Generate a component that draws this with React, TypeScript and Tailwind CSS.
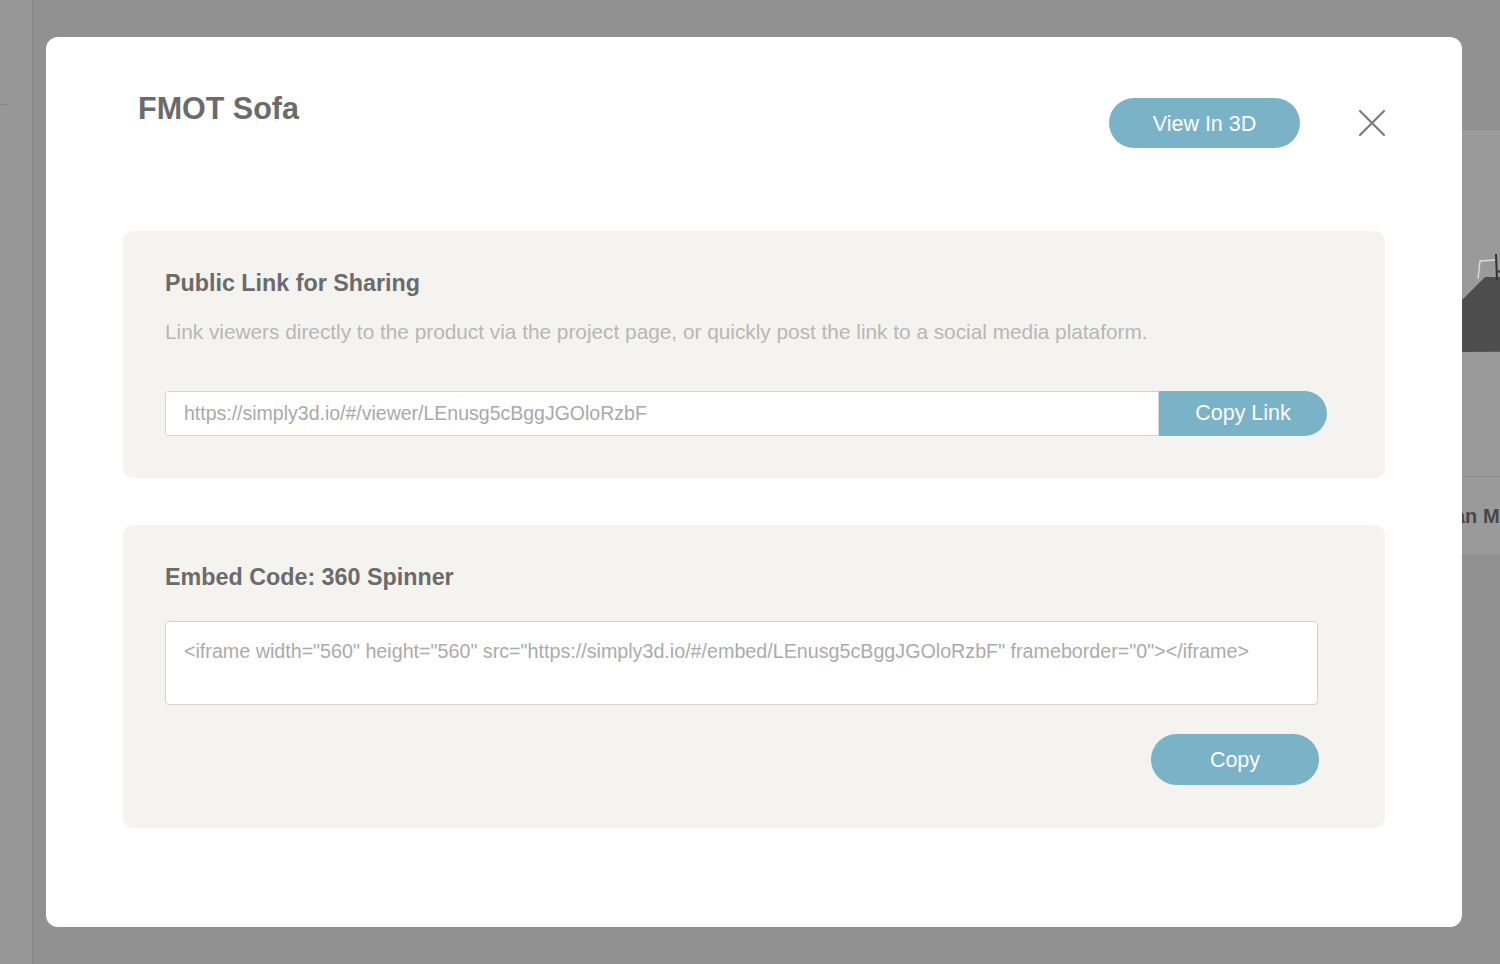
import React from "react"

const shareUrl = "https://simply3d.io/#/viewer/LEnusg5cBggJGOloRzbF"
const embedCode =
  '<iframe width="560" height="560" src="https://simply3d.io/#/embed/LEnusg5cBggJGOloRzbF" frameborder="0"></iframe>'

const CloseIcon = () => (
  <svg width="26" height="26" viewBox="0 0 26 26" fill="none">
    <path d="M1 1L25 25M25 1L1 25" stroke="#7d7d7d" strokeWidth="2.2" strokeLinecap="square" />
  </svg>
)

// page that sits behind the dimmed overlay
const BackgroundPage = () => {
  return (
    <div className="flex h-full w-full">
      <div className="h-full w-[33px] shrink-0 border-r border-[#858585] bg-[#979797] pt-[104px]">
        <div className="h-px w-[9px] bg-[#858585]" />
      </div>
      <div className="flex flex-1 justify-end pt-[130px]">
        <div className="-mr-[240px] h-[424px] w-[300px] shrink-0 bg-[#9a9a9a]">
          <div className="h-[347px] border-b border-[#8a8a8a]">
            <svg width="300" height="346" viewBox="0 0 300 346">
              <path d="M22 170 L45 147 L300 147 L300 220 L22 222 Z" fill="#4d4d4d" />
              <path d="M38 149 L40 131 L55 130" stroke="#d8d8d8" strokeWidth="1.5" fill="none" />
              <path d="M56 124 L57 150 M58 141 L62 143" stroke="#333" strokeWidth="2" fill="none" />
            </svg>
          </div>
          <div className="flex h-[77px] items-center pl-[14px]">
            <span className="text-[20px] font-bold text-[#474747]">an Model</span>
          </div>
        </div>
      </div>
    </div>
  )
}

const ShareModal = () => {
  return (
    <div className="h-[890px] w-[1416px] rounded-[12px] bg-white px-[77px] pt-[56px]">
      {/* Header */}
      <div className="flex items-start justify-between">
        <h2 className="pl-[15px] text-[30.5px] font-bold leading-[30px] text-[#6b6b6b]">FMOT Sofa</h2>
        <div className="mt-[5px] flex items-center gap-[59px]">
          <button className="h-[50px] w-[191px] rounded-full bg-[#7ab2c8] pt-[3px] text-[21.5px] text-white">
            View In 3D
          </button>
          <button className="flex h-[26px] w-[26px] items-center justify-center">
            <CloseIcon />
          </button>
        </div>
      </div>

      {/* Public link */}
      <div className="mt-[83px] rounded-[10px] bg-[#f4f3f0] px-[42px] pb-[42px] pt-[38px]">
        <h3 className="text-[23.3px] font-bold leading-[28px] text-[#6b6b6b]">Public Link for Sharing</h3>
        <p className="mt-[23px] text-[20.8px] leading-[24px] text-[#b7b7b7]">
          Link viewers directly to the product via the project page, or quickly post the link to a social media plataform.
        </p>
        <div className="mt-[47px] flex h-[45px] w-[1162px]">
          <input
            readOnly
            value={shareUrl}
            className="h-full flex-1 rounded-l-[3px] border border-[#d4d4d4] bg-white pl-[18px] text-[19.5px] text-[#a9a9a9] outline-none"
          />
          <button className="h-full w-[168px] rounded-r-full bg-[#7ab2c8] text-[21.5px] text-white">Copy Link</button>
        </div>
      </div>

      {/* Embed code */}
      <div className="mt-[47px] rounded-[10px] bg-[#f4f3f0] px-[42px] pb-[43px] pt-[38px]">
        <h3 className="text-[23.3px] font-bold leading-[28px] text-[#6b6b6b]">Embed Code: 360 Spinner</h3>
        <textarea
          readOnly
          value={embedCode}
          className="mt-[30px] block h-[84px] w-[1153px] resize-none overflow-hidden rounded-[4px] border border-[#d2d2d2] bg-white pl-[18px] pt-[17px] text-[19.7px] leading-[24px] text-[#ababab] outline-none"
        />
        <div className="mt-[29px] flex w-[1154px] justify-end">
          <button className="h-[51px] w-[168px] rounded-full bg-[#7ab2c8] pt-[2px] text-[21.5px] text-white">Copy</button>
        </div>
      </div>
    </div>
  )
}

export default function App() {
  return (
    <div className="relative h-[964px] w-full overflow-hidden bg-[#919191] font-['Liberation_Sans',Arial,sans-serif]">
      <BackgroundPage />
      <div className="absolute inset-0 flex items-center justify-center pl-[8px]">
        <ShareModal />
      </div>
    </div>
  )
}
